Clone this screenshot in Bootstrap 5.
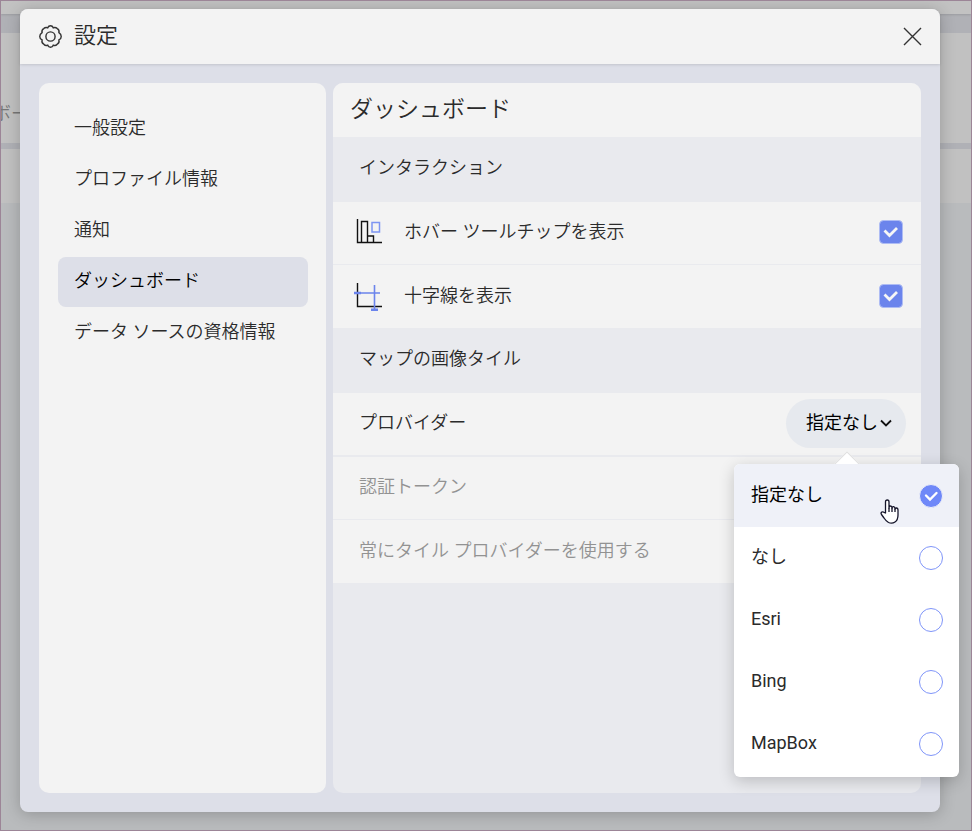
<!DOCTYPE html>
<html lang="ja">
<head>
<meta charset="utf-8">
<meta name="viewport" content="width=device-width, initial-scale=1">
<title>設定</title>
<link href="https://cdn.jsdelivr.net/npm/bootstrap@5.3.0/dist/css/bootstrap.min.css" rel="stylesheet">
<style>
  :root { --accent: #6b84ec; --panel: #f3f3f3; --frame: #dddfe8; --band: #e9eaee; --ink: #2b2b2b; }
  body { font-family: Roboto, "Noto Sans CJK JP", sans-serif; font-size: 18px; font-weight: 350; line-height: 24px; color: var(--ink); background: #b9bbbd; }
  .stage { padding: 8px 31px 18px 19px; border: 1px solid #9c8597; }
  .underlay { inset: 0; z-index: 0; color: #777; }
  .underlay .strip-top { height: 13px; background: #c2c2c2; box-shadow: 0 1px 2px rgba(0,0,0,.12); }
  .underlay .strip-main { height: 110px; margin-top: 19px; padding-top: 69px; background: #c1c1c1; }
  .underlay .strip-sub { height: 54px; margin-top: 6px; background: #c1c1c1; }
  .underlay .top-area { background: #b0b1b6; }
  .crumb { margin-left: -8px; }
  .settings { z-index: 1; background: var(--frame); border-radius: 8px; box-shadow: 0 2px 16px rgba(0,0,0,.22); }
  .settings-head { height: 55px; padding: 0 18px 0 19px; background: var(--panel); border-radius: 8px 8px 0 0; box-shadow: 0 1px 3px rgba(0,0,0,.12); }
  .settings-head h1 { padding-bottom: 2px; font-size: 22px; line-height: 28px; font-weight: 350; }
  .settings-body { padding: 19px; gap: 7px; }
  .side { width: 287px; padding: 21px 18px 21px 19px; gap: 1px; background: var(--panel); border-radius: 10px; }
  .side .nav-link { height: 50px; padding: 0 16px 3px; color: var(--ink); border-radius: 8px; }
  .side .nav-link.active { background: var(--frame); color: #000; }
  .pane { background: var(--band); border-radius: 10px; min-width: 0; }
  .pane h2 { height: 54px; padding: 0 17px; font-size: 23px; line-height: 28px; font-weight: 350; background: var(--panel); border-radius: 10px 10px 0 0; }
  .pane h3 { height: 65px; padding: 0 26px 4px; font-size: 18px; line-height: 24px; font-weight: 350; }
  .opt { height: 63px; padding: 0 15px 2px 26px; background: var(--panel); border-bottom: 1px solid var(--band); }
  .opt.last { border-bottom: 0; }
  .opt.main { height: 64px; padding-bottom: 1px; border-bottom-width: 2px; }
  .opt.main > span { padding-bottom: 2px; }
  .opt.tick { padding: 0 18px 2px 20px; }
  .opt.off { color: #929292; }
  .opt label { padding-left: 21px; }
  .box { width: 24px; height: 24px; margin: 0; border-radius: 4px; border: 1px solid #c9d2f5; }
  .box:checked { background-color: var(--accent); border-color: #aebcf4; background-size: 24px 24px;
    background-image: url("data:image/svg+xml,%3csvg xmlns='http://www.w3.org/2000/svg' viewBox='0 0 24 24'%3e%3cpath d='M5.5 10.5l5 5L18 8' fill='none' stroke='%23f6f6f6' stroke-width='2.8'/%3e%3c/svg%3e"); }
  .pill { width: 120px; height: 49px; padding: 0 0 2px 6px; gap: 2px; border: 0; border-radius: 25px; background: #e6e9ee; color: #000; font-size: 18px; font-weight: 400; }
  .pill:hover, .pill:active { background: #e6e9ee; }
  .providers { display: block; width: 225px; top: 65px; right: -53px; padding: 0 0 2px; border: 0; border-radius: 6px; font-size: 18px; color: var(--ink); box-shadow: 0 4px 16px rgba(0,0,0,.2); }
  .providers::before { content: ""; position: absolute; left: 104px; top: -9px; width: 18px; height: 18px; background: #fff; border: 1px solid #e0e0e0; transform: rotate(45deg); z-index: -1; }
  .opt .choice { height: 62px; padding: 0 16px 0 17px; background: #fff; font-weight: 400; }
  .opt .choice.picked { height: 63px; background: #eff1f8; border-radius: 6px 6px 0 0; color: #000; }
  .choice > span { padding-bottom: 2px; }
  .choice:last-of-type { border-radius: 0 0 6px 6px; }
  .choice input { width: 24px; height: 24px; margin: 0; border: 1px solid #7f95f9; }
  .choice input:checked { background-color: #6f88f8; border: 1px solid #eff1f8; background-size: 22px 22px;
    background-image: url("data:image/svg+xml,%3csvg xmlns='http://www.w3.org/2000/svg' viewBox='0 0 22 22'%3e%3cpath d='M6 10.5l4 4L16.500 8' fill='none' stroke='white' stroke-width='2.400' stroke-linecap='round'/%3e%3c/svg%3e"); }
  .pointer { left: 146px; top: 35px; z-index: 2; pointer-events: none; }
</style>
</head>
<body>
<div class="stage position-relative min-vh-100 d-flex flex-column overflow-hidden">
  <div class="underlay position-absolute" aria-hidden="true">
    <div class="top-area">
      <div class="strip-top"></div>
      <div class="strip-main"><div class="crumb text-nowrap">ボード</div></div>
      <div class="strip-sub"></div>
    </div>
  </div>

  <main class="settings position-relative flex-grow-1 d-flex flex-column">
    <header class="settings-head d-flex align-items-center">
      <svg width="23" height="23" viewBox="0 0 24 24" fill="none" stroke="#333" stroke-width="1.500" aria-hidden="true">
        <path d="M12 .8Q14 .8 14.900 2.900Q17.300 2 19 3.700Q21.500 5 20.800 8Q23.200 9.500 23.200 12Q23.200 14.500 20.800 15.500Q21.500 19 19 20Q17.300 22 14.900 21.100Q14 23.200 12 23.200Q10 23.200 9.100 21.100Q6.700 22 5 20Q2.500 19 3.200 15.500Q.8 14.500 .8 12Q.8 9.500 3.200 8Q2.500 5 5 3.700Q6.700 2 9.100 2.900Q10 .8 12 .8Z"/>
        <circle cx="12" cy="12" r="4.800"/>
      </svg>
      <h1 class="mb-0 ms-2 ps-1 flex-grow-1">設定</h1>
      <button type="button" class="btn p-0 border-0 d-flex" aria-label="閉じる">
        <svg width="19" height="19" viewBox="0 0 19 19" stroke="#333" stroke-width="1.400"><path d="M1 1l17 17M18 1L1 18"/></svg>
      </button>
    </header>

    <div class="settings-body d-flex flex-grow-1">
      <nav class="side nav flex-column flex-nowrap flex-shrink-0">
        <a class="nav-link d-flex align-items-center" href="#">一般設定</a>
        <a class="nav-link d-flex align-items-center" href="#">プロファイル情報</a>
        <a class="nav-link d-flex align-items-center" href="#">通知</a>
        <a class="nav-link d-flex align-items-center active" aria-current="page" href="#">ダッシュボード</a>
        <a class="nav-link d-flex align-items-center" href="#">データ ソースの資格情報</a>
      </nav>

      <section class="pane flex-grow-1">
        <h2 class="mb-0 d-flex align-items-center">ダッシュボード</h2>
        <h3 class="mb-0 d-flex align-items-center">インタラクション</h3>
        <div class="opt tick d-flex align-items-center">
          <svg width="30" height="30" viewBox="0 0 30 30" fill="none" stroke="#111" aria-hidden="true">
            <path d="M4.500 2v23.500H29M8.500 25V4.500h6v20.500M14.500 19h6v6" stroke-width="1.400"/>
            <path d="M19 5.500h7.500v9.500h-7.500z" stroke="#7d95f2" stroke-width="1.500"/>
          </svg>
          <label class="flex-grow-1" for="hover">ホバー ツールチップを表示</label>
          <input class="box form-check-input" type="checkbox" id="hover" checked>
        </div>
        <div class="opt tick last d-flex align-items-center">
          <svg width="30" height="30" viewBox="0 0 30 30" fill="none" stroke="#111" aria-hidden="true">
            <path d="M4.500 2v23.500H29" stroke-width="1.400"/>
            <path d="M2 12h25M21.500 4v25" stroke="#6b84ec" stroke-width="1.600"/>
            <path d="M1 12h7M18 28.700h7" stroke="#6b84ec" stroke-width="2.600"/>
          </svg>
          <label class="flex-grow-1" for="cross">十字線を表示</label>
          <input class="box form-check-input" type="checkbox" id="cross" checked>
        </div>
        <h3 class="mb-0 d-flex align-items-center">マップの画像タイル</h3>
        <div class="opt main d-flex align-items-center">
          <span class="flex-grow-1">プロバイダー</span>
          <div class="dropdown position-relative">
            <button type="button" class="pill btn d-flex align-items-center justify-content-center" aria-expanded="true" aria-haspopup="true">指定なし
              <svg width="12" height="8" viewBox="0 0 12 8" fill="none" stroke="#111" stroke-width="1.800" aria-hidden="true"><path d="M1 1.500l5 5 5-5"/></svg>
            </button>
            <div class="providers dropdown-menu show" role="radiogroup" aria-label="プロバイダー">
              <label class="choice picked d-flex align-items-center justify-content-between"><span>指定なし</span><input class="form-check-input" type="radio" name="provider" checked></label>
              <label class="choice d-flex align-items-center justify-content-between"><span>なし</span><input class="form-check-input" type="radio" name="provider"></label>
              <label class="choice d-flex align-items-center justify-content-between"><span>Esri</span><input class="form-check-input" type="radio" name="provider"></label>
              <label class="choice d-flex align-items-center justify-content-between"><span>Bing</span><input class="form-check-input" type="radio" name="provider"></label>
              <label class="choice d-flex align-items-center justify-content-between"><span>MapBox</span><input class="form-check-input" type="radio" name="provider"></label>
              <svg class="pointer position-absolute" width="20" height="26" viewBox="0 0 20 26" fill="#fff" stroke="#15152a" stroke-width="1.300" stroke-linejoin="round" aria-hidden="true">
                <path d="M5.500 14V3Q5.500 1 7.300 1Q9 1 9 3V9Q9 7 10.500 7Q12 7 12 9Q12.300 7.500 13.700 7.700Q15 8 15 10Q15.500 8.800 16.700 9Q18 9.300 18 11V16Q18 21 15 23Q12 25 8.500 23.500Q6 22 4 19L1.500 15.500Q.5 14 1.800 13Q3 12.500 4 13.300Z"/>
                <path d="M9 9v4M12 9v4M15 10v3"/>
              </svg>
            </div>
          </div>
        </div>
        <div class="opt off d-flex align-items-center">認証トークン</div>
        <div class="opt off last d-flex align-items-center">常にタイル プロバイダーを使用する</div>
      </section>
    </div>
  </main>
</div>
<script src="https://cdn.jsdelivr.net/npm/bootstrap@5.3.0/dist/js/bootstrap.bundle.min.js"></script>
</body>
</html>
